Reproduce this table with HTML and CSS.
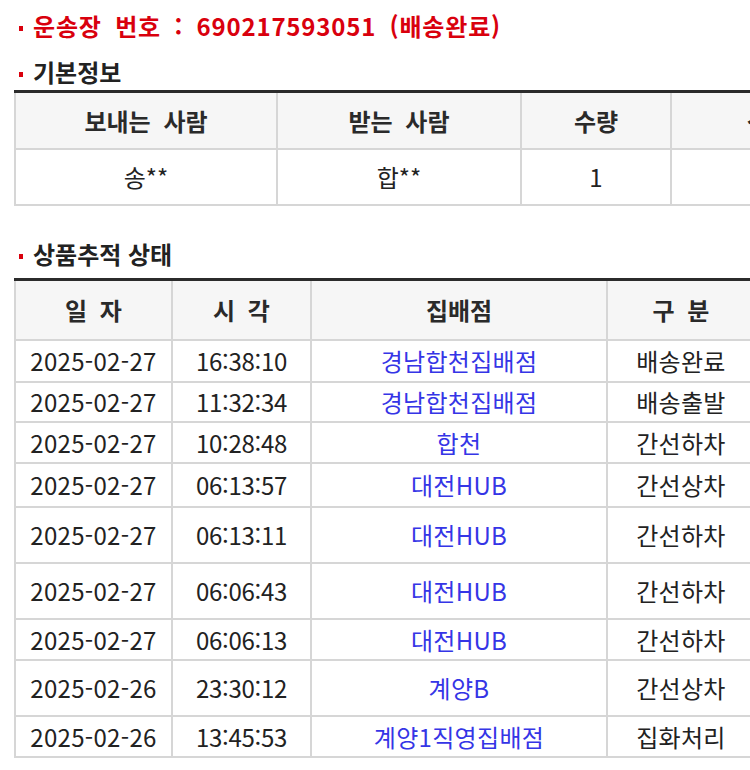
FILE: index.html
```html
<!DOCTYPE html>
<html lang="ko">
<head>
<meta charset="utf-8">
<title>배송조회</title>
<link rel="stylesheet" href="styles.css">
</head>
<body>
<div class="page">
  <h2 class="title bullet">운송장 번호 : 690217593051 (배송완료)</h2>

  <h3 class="section bullet">기본정보</h3>
  <table class="grid info">
    <colgroup>
      <col class="c-sender"><col class="c-receiver"><col class="c-qty"><col class="c-extra"><col class="c-extra">
    </colgroup>
    <thead>
      <tr><th>보내는 사람</th><th>받는 사람</th><th>수량</th><th class="peek">상품정보</th><th>인수자</th></tr>
    </thead>
    <tbody>
      <tr><td>송**</td><td>합**</td><td>1</td><td></td><td></td></tr>
    </tbody>
  </table>

  <h3 class="section bullet second">상품추적 상태</h3>
  <table class="grid track">
    <colgroup>
      <col class="c-date"><col class="c-time"><col class="c-office"><col class="c-kind"><col class="c-extra"><col class="c-extra">
    </colgroup>
    <thead>
      <tr><th>일 자</th><th>시 각</th><th>집배점</th><th>구 분</th><th></th><th></th></tr>
    </thead>
    <tbody>
      <tr class="first"><td>2025-02-27</td><td class="time">16:38:10</td><td><a href="#">경남합천집배점</a></td><td>배송완료</td><td></td><td></td></tr>
      <tr class="short"><td>2025-02-27</td><td class="time">11:32:34</td><td><a href="#">경남합천집배점</a></td><td>배송출발</td><td></td><td></td></tr>
      <tr><td>2025-02-27</td><td class="time">10:28:48</td><td><a href="#">합천</a></td><td>간선하차</td><td></td><td></td></tr>
      <tr class="mid"><td>2025-02-27</td><td class="time">06:13:57</td><td><a href="#">대전HUB</a></td><td>간선상차</td><td></td><td></td></tr>
      <tr class="tall"><td>2025-02-27</td><td class="time">06:13:11</td><td><a href="#">대전HUB</a></td><td>간선하차</td><td></td><td></td></tr>
      <tr class="tall"><td>2025-02-27</td><td class="time">06:06:43</td><td><a href="#">대전HUB</a></td><td>간선하차</td><td></td><td></td></tr>
      <tr><td>2025-02-27</td><td class="time">06:06:13</td><td><a href="#">대전HUB</a></td><td>간선하차</td><td></td><td></td></tr>
      <tr class="tall"><td>2025-02-26</td><td class="time">23:30:12</td><td><a href="#">계양B</a></td><td>간선상차</td><td></td><td></td></tr>
      <tr><td>2025-02-26</td><td class="time">13:45:53</td><td><a href="#">계양1직영집배점</a></td><td>집화처리</td><td></td><td></td></tr>
    </tbody>
  </table>
</div>
</body>
</html>
```

FILE: styles.css
```css
html, body {
  margin: 0;
  padding: 0;
  background: #ffffff;
}

body {
  overflow: hidden;
  font-family: "Noto Sans CJK KR", "Noto Sans", sans-serif;
  color: #222222;
}

.page {
  padding: 11px 0 0 14px;
  width: 1200px;
}

.bullet::before {
  content: "";
  display: inline-block;
  width: 4px;
  height: 5px;
  background: #d9000d;
  margin: 0 10px 0 5px;
  vertical-align: middle;
  position: relative;
  top: -1px;
}

.title {
  margin: 0;
  height: 30px;
  line-height: 30px;
  font-size: 24px;
  font-weight: bold;
  color: #d9000d;
  letter-spacing: 0.8px;
  word-spacing: 6px;
}

.section {
  margin: 16px 0 3px;
  height: 30px;
  line-height: 30px;
  font-size: 24px;
  font-weight: bold;
  color: #222222;
}

.section.second {
  margin-top: 33px;
  margin-bottom: 9px;
}

.grid {
  border-collapse: collapse;
  table-layout: fixed;
  font-size: 24px;
}

.grid th,
.grid td {
  border: 2px solid #d6d6d6;
  text-align: center;
  padding: 0;
  white-space: nowrap;
  line-height: 30px;
}

.grid th {
  background: #f6f6f6;
  color: #2a2a2a;
  font-weight: bold;
  border-top: 3px solid #2b2b2b;
  word-spacing: 6px;
}

.grid th.peek {
  text-align: left;
  padding-left: 75px;
}

.info { width: 1100px; }
.info th { height: 55px; }
.info td { height: 54px; }

.c-sender { width: 262px; }
.c-receiver { width: 244px; }
.c-qty { width: 150px; }
.c-extra { width: 222px; }

.track { width: 1184px; }
.track th { height: 58px; }
.track td {
  height: 39px;
  letter-spacing: 0.3px;
}
.track td.time { letter-spacing: -0.3px; }
.track tr.first td { height: 40px; }
.track tr.short td { height: 38px; }
.track tr.mid td { height: 42px; }
.track tr.tall td { height: 54px; }

.c-date { width: 157px; }
.c-time { width: 139px; }
.c-office { width: 296px; }
.c-kind { width: 148px; }

.track a {
  color: #3535e6;
  text-decoration: none;
}
```
